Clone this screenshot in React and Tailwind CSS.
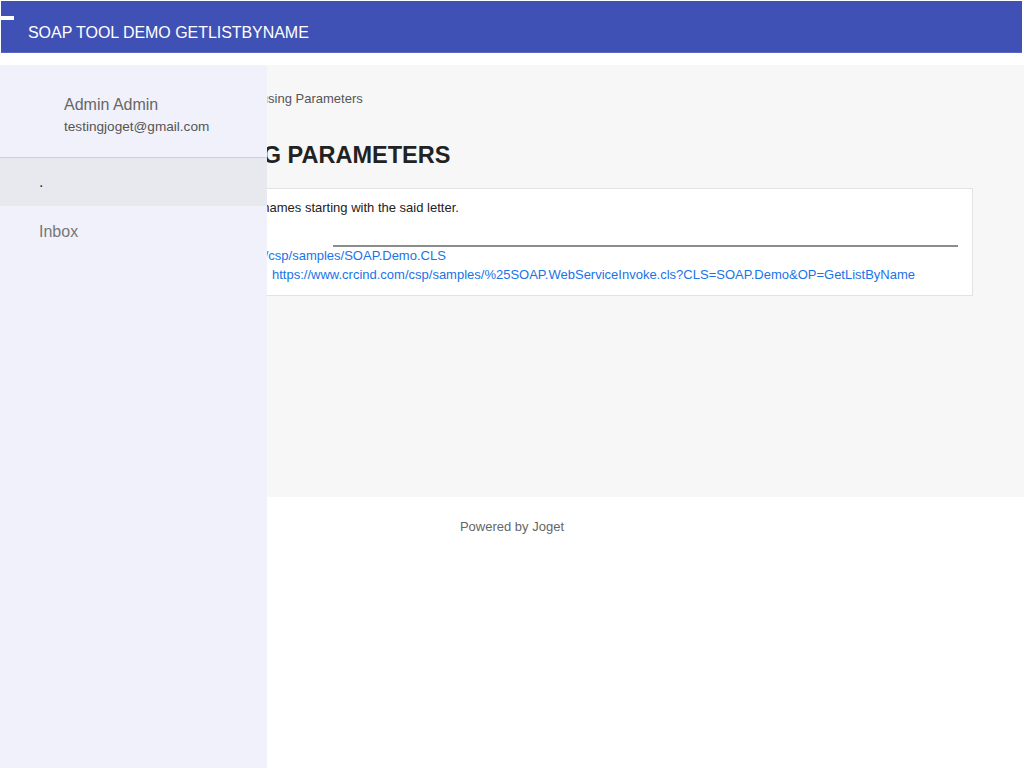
const links = {
  wsdl: 'https://www.crcind.com/csp/samples/SOAP.Demo.CLS',
  invoke: 'https://www.crcind.com/csp/samples/%25SOAP.WebServiceInvoke.cls?CLS=SOAP.Demo&OP=GetListByName',
};

const Sidebar = () => (
  <aside className="absolute left-0 top-[65px] bottom-0 w-[267px] bg-[#f0f1fa]">
    <div className="h-[93px] pl-[64px] pt-[30px] border-b border-[#cfd0d6]">
      <div className="text-[16px] leading-[20px] text-[#666]">Admin Admin</div>
      <div className="mt-[3px] text-[13.6px] leading-[18px] text-[#555]">testingjoget@gmail.com</div>
    </div>
    <div className="h-[48px] bg-[#e8e9ef] pl-[39px] pt-[12px] text-[16px] text-[#333]">.</div>
    <div className="h-[50px] pl-[39px] pt-[14px] text-[16px] text-[#777]">Inbox</div>
  </aside>
);

export default function App() {
  return (
    <div className="relative w-full h-[768px] bg-white overflow-hidden font-['Liberation_Sans',Arial,sans-serif]">
      <header className="relative mt-px ml-px mr-[2px] h-[52px] bg-[#3f51b5] border-b border-[#5865c4] pl-[27px] pt-[23px]">
        <span className="absolute left-[-1px] top-[15px] w-[14px] h-[4px] bg-white" />
        <h1 className="text-[16px] leading-[18px] text-white tracking-[-0.05px]">SOAP TOOL DEMO GETLISTBYNAME</h1>
      </header>

      <main className="mt-[12px] h-[432px] bg-[#f7f7f7] pl-[50px] pr-[51px] pt-[26px]">
        <div className="pl-[70px] text-[13px] leading-[15px] text-[#555]">Home › GetListByName using Parameters</div>
        <h2 className="mt-[35px] -ml-[51px] text-[23.5px] leading-[28px] font-bold text-[#222] whitespace-nowrap">GETLISTBYNAME USING PARAMETERS</h2>
        <section className="mt-[19px] h-[108px] bg-white border border-[#e3e3e3] px-[12px] pt-[11px] text-[13px] leading-[15px]">
          <p className="pl-[36px] text-[#222]">Returns a list of people with names starting with the said letter.</p>
          <div className="mt-[30px] ml-[270px] mr-[2px] h-[2px] bg-[#8c8c8c]" />
          <p className="mt-px pl-[24px] text-[#1a73e8]">WSDL: {links.wsdl}</p>
          <div className="mt-[4px] flex">
            <span className="w-[209px] shrink-0 text-[#333]">Test Endpoint:</span>
            <span className="text-[#1a73e8]">{links.invoke}</span>
          </div>
        </section>
      </main>

      <footer className="pt-[22px] text-center text-[13px] leading-[15px] text-[#666]">Powered by Joget</footer>

      <Sidebar />
    </div>
  );
}
